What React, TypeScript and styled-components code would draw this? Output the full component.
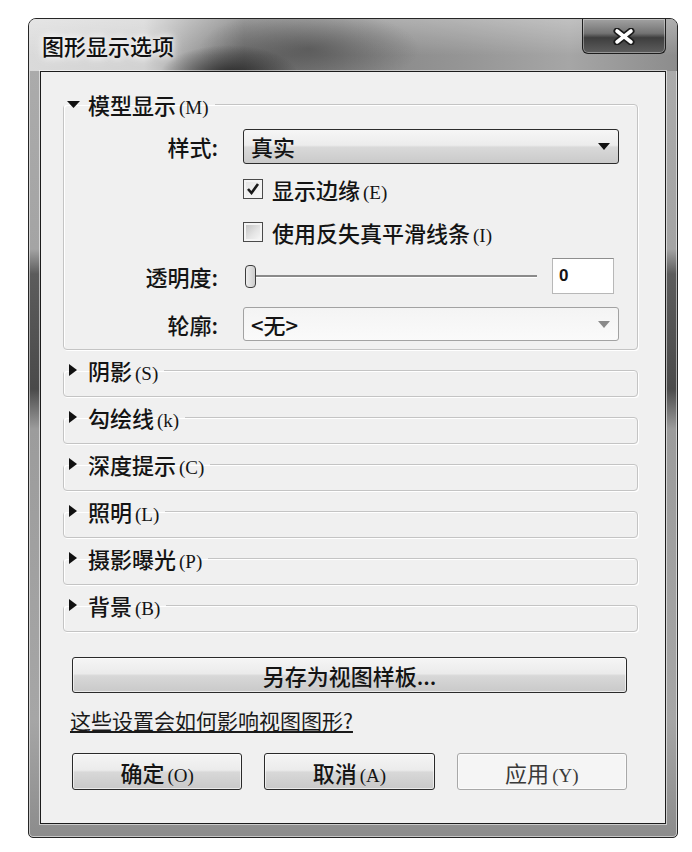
import styled, { createGlobalStyle } from "styled-components"

const GlobalStyle = createGlobalStyle`
  html, body {
    margin: 0;
    padding: 0;
    background: #ffffff;
  }
  body {
    font-family: "Noto Sans CJK SC", "Noto Sans", sans-serif;
    font-weight: 500;
    color: #141414;
  }
`

const Page = styled.div`
  width: 692px;
  height: 852px;
  box-sizing: border-box;
  padding: 18px 0 0 28px;
`

const Window = styled.div`
  width: 650px;
  height: 820px;
  box-sizing: border-box;
  display: flex;
  flex-direction: column;
  border: 1px solid #262626;
  border-radius: 8px 8px 5px 5px;
  overflow: hidden;
  background: linear-gradient(
    to bottom,
    #adadad 0,
    #a4a4a4 230px,
    #5c5c5c 255px,
    #4a4a4a 370px,
    #9c9c9c 410px,
    #a6a6a6 700px,
    #8c8c8c 100%
  );
  box-shadow: inset 0 0 0 1px rgba(255, 255, 255, 0.5);
`

const TitleBar = styled.div`
  height: 52px;
  flex: none;
  display: flex;
  justify-content: space-between;
  align-items: flex-start;
  padding: 0 11px 0 13px;
  background:
    radial-gradient(ellipse 70px 32px at 200px 58px, rgba(25, 25, 25, 0.9), rgba(25, 25, 25, 0) 100%),
    radial-gradient(ellipse 110px 40px at 280px 30px, rgba(60, 60, 60, 0.55), rgba(60, 60, 60, 0) 100%),
    linear-gradient(to bottom, rgba(255, 255, 255, 0.3), rgba(255, 255, 255, 0) 70%),
    linear-gradient(
      to right,
      #dadada 0,
      #d2d2d2 115px,
      #a4a4a4 160px,
      #727272 215px,
      #868686 320px,
      #969696 440px,
      #a6a6a6 540px,
      #8c8c8c 100%
    );
`

const Title = styled.div`
  align-self: center;
  font-size: 22px;
  line-height: 28px;
  color: #101010;
  text-shadow: 0 0 6px #ffffff, 0 0 12px rgba(255, 255, 255, 0.8);
`

const CloseButton = styled.button`
  width: 84px;
  height: 35px;
  padding: 0;
  border: 1px solid #1e1e1e;
  border-top: none;
  border-radius: 0 0 6px 6px;
  display: flex;
  align-items: center;
  justify-content: center;
  background: linear-gradient(to bottom, #a2a2a2 0%, #737373 42%, #3e3e3e 55%, #5e5e5e 100%);
  box-shadow: inset 0 0 0 1px rgba(255, 255, 255, 0.35);
`

const Client = styled.div`
  flex: 1;
  display: flex;
  flex-direction: column;
  margin: 0 11px 13px 11px;
  padding: 20px 27px 0 22px;
  border: 1px solid #1c1c1c;
  background: #f0f0f0;
  box-shadow: 0 0 0 1px rgba(255, 255, 255, 0.55);
`

const Group = styled.fieldset<{ $open?: boolean }>`
  margin: 0 0 8px;
  padding: ${(p) => (p.$open ? "8px 18px 0 0" : "0 0 14px 0")};
  min-width: 0;
  border: 1px solid #c4c4c4;
  border-radius: 4px;
  box-shadow: inset 1px 1px 0 #ffffff, 1px 1px 0 #ffffff;
`

const Legend = styled.legend`
  display: flex;
  align-items: center;
  gap: 8px;
  height: 24px;
  padding: 0 6px 0 3px;
  font-size: 22px;
  line-height: 24px;
  color: #141414;
`

const Key = styled.span`
  margin-left: 3px;
  font-family: "Liberation Serif", serif;
  font-weight: normal;
  font-size: 19px;
  line-height: 1;
`

const FieldGrid = styled.div`
  display: grid;
  grid-template-columns: 154px 1fr;
  grid-template-rows: 44px 42px 43px 46px 50px;
  column-gap: 25px;
  align-items: center;
`

const Label = styled.div`
  grid-column: 1;
  text-align: right;
  font-size: 22px;
  line-height: 28px;
`

const Select = styled.div<{ $flat?: boolean }>`
  grid-column: 2;
  height: ${(p) => (p.$flat ? "34px" : "35px")};
  box-sizing: border-box;
  display: flex;
  align-items: center;
  justify-content: space-between;
  padding: 0 8px 0 7px;
  font-size: 22px;
  line-height: 28px;
  border: 1px solid ${(p) => (p.$flat ? "#a2a2a2" : "#2c2c2c")};
  border-radius: 3px;
  background: ${(p) =>
    p.$flat
      ? "linear-gradient(to bottom, #f4f4f4, #fafafa)"
      : "linear-gradient(to bottom, #f6f6f6 0%, #ececec 46%, #d9d9d9 52%, #cacaca 100%)"};
`

const Check = styled.label`
  grid-column: 2;
  display: flex;
  align-items: center;
  gap: 9px;
  font-size: 22px;
  line-height: 26px;
`

const CheckBox = styled.span<{ $checked?: boolean }>`
  width: 20px;
  height: 20px;
  box-sizing: border-box;
  display: flex;
  align-items: center;
  justify-content: center;
  border: 1px solid #4a4a4a;
  background: ${(p) =>
    p.$checked
      ? "linear-gradient(135deg, #e2e2e2, #fbfbfb)"
      : "linear-gradient(135deg, #bdbdbd 0%, #e4e4e4 55%, #fafafa 100%)"};
  box-shadow: inset 0 0 0 2px #f4f4f4;
`

const SliderRow = styled.div`
  grid-column: 2;
  display: flex;
  align-items: center;
  padding-right: 5px;
`

const Thumb = styled.span`
  width: 11px;
  height: 23px;
  margin-left: 2px;
  box-sizing: border-box;
  flex: none;
  border: 1px solid #3c3c3c;
  border-radius: 4px;
  background: linear-gradient(to right, #eeeeee, #cdcdcd);
`

const Track = styled.span`
  flex: 1;
  height: 2px;
  margin-right: 15px;
  background: #8a8a8a;
  box-shadow: 0 1px 0 #ffffff;
`

const NumberBox = styled.div`
  width: 62px;
  height: 36px;
  box-sizing: border-box;
  display: flex;
  align-items: center;
  padding-left: 6px;
  background: #ffffff;
  border: 1px solid #b8b8b8;
  border-top-color: #8e8e8e;
  font-family: "Liberation Sans", Arial, sans-serif;
  font-weight: bold;
  font-size: 17px;
`

const Button = styled.button<{ $disabled?: boolean }>`
  height: 37px;
  padding: 0;
  font-family: "Noto Sans CJK SC", "Noto Sans", sans-serif;
  font-weight: ${(p) => (p.$disabled ? 400 : 500)};
  font-size: 22px;
  line-height: 28px;
  color: ${(p) => (p.$disabled ? "#3a3a3a" : "#141414")};
  border: 1px solid ${(p) => (p.$disabled ? "#a8a8a8" : "#2a2a2a")};
  border-radius: 3px;
  background: ${(p) =>
    p.$disabled
      ? "#f5f5f5"
      : "linear-gradient(to bottom, #f5f5f5 0%, #ebebeb 46%, #d8d8d8 52%, #c9c9c9 100%)"};
  box-shadow: inset 0 0 0 1px rgba(255, 255, 255, 0.6);
`

const SaveButton = styled(Button)`
  height: 36px;
  margin: 17px 11px 0 9px;
`

const HelpLink = styled.a`
  align-self: flex-start;
  margin: 15px 0 0 7px;
  font-size: 21px;
  font-weight: 400;
  line-height: 24px;
  color: #1a1a1a;
  text-decoration: underline;
`

const ButtonRow = styled.div`
  display: grid;
  grid-template-columns: repeat(3, 1fr);
  gap: 22px;
  margin: 21px 11px 0 9px;
`

function Tri({ open }: { open?: boolean }) {
  return (
    <svg width="13" height="12" viewBox="0 0 13 12">
      {open ? <polygon points="0,3 13,3 6.5,10" fill="#111" /> : <polygon points="2,0 10,6 2,12" fill="#111" />}
    </svg>
  )
}

function Arrow({ color }: { color: string }) {
  return (
    <svg width="12" height="7" viewBox="0 0 12 7">
      <polygon points="0,0 12,0 6,7" fill={color} />
    </svg>
  )
}

const collapsed = [
  { name: "阴影", key: "(S)" },
  { name: "勾绘线", key: "(k)" },
  { name: "深度提示", key: "(C)" },
  { name: "照明", key: "(L)" },
  { name: "摄影曝光", key: "(P)" },
  { name: "背景", key: "(B)" },
]

export default function App() {
  return (
    <Page>
      <GlobalStyle />
      <Window>
        <TitleBar>
          <Title>图形显示选项</Title>
          <CloseButton>
            <svg width="22" height="17" viewBox="0 0 22 17">
              <path d="M4 3 L18 14 M18 3 L4 14" stroke="#1c1c1c" strokeWidth="7" strokeLinecap="round" />
              <path d="M4 3 L18 14 M18 3 L4 14" stroke="#ffffff" strokeWidth="3.6" strokeLinecap="round" />
            </svg>
          </CloseButton>
        </TitleBar>
        <Client>
          <Group $open>
            <Legend>
              <Tri open />
              <span>
                模型显示<Key>(M)</Key>
              </span>
            </Legend>
            <FieldGrid>
              <Label>样式:</Label>
              <Select>
                <span>真实</span>
                <Arrow color="#111" />
              </Select>
              <Check>
                <CheckBox $checked>
                  <svg width="14" height="14" viewBox="0 0 14 14">
                    <path d="M2 7 L5.5 11 L12 2" fill="none" stroke="#1a1a1a" strokeWidth="2.6" />
                  </svg>
                </CheckBox>
                <span>
                  显示边缘<Key>(E)</Key>
                </span>
              </Check>
              <Check>
                <CheckBox />
                <span>
                  使用反失真平滑线条<Key>(I)</Key>
                </span>
              </Check>
              <Label>透明度:</Label>
              <SliderRow>
                <Thumb />
                <Track />
                <NumberBox>0</NumberBox>
              </SliderRow>
              <Label>轮廓:</Label>
              <Select $flat>
                <span>&lt;无&gt;</span>
                <Arrow color="#8a8a8a" />
              </Select>
            </FieldGrid>
          </Group>
          {collapsed.map((g) => (
            <Group key={g.name}>
              <Legend>
                <Tri />
                <span>
                  {g.name}
                  <Key>{g.key}</Key>
                </span>
              </Legend>
            </Group>
          ))}
          <SaveButton>另存为视图样板...</SaveButton>
          <HelpLink href="#">这些设置会如何影响视图图形?</HelpLink>
          <ButtonRow>
            <Button>
              确定<Key>(O)</Key>
            </Button>
            <Button>
              取消<Key>(A)</Key>
            </Button>
            <Button $disabled>
              应用<Key>(Y)</Key>
            </Button>
          </ButtonRow>
        </Client>
      </Window>
    </Page>
  )
}
